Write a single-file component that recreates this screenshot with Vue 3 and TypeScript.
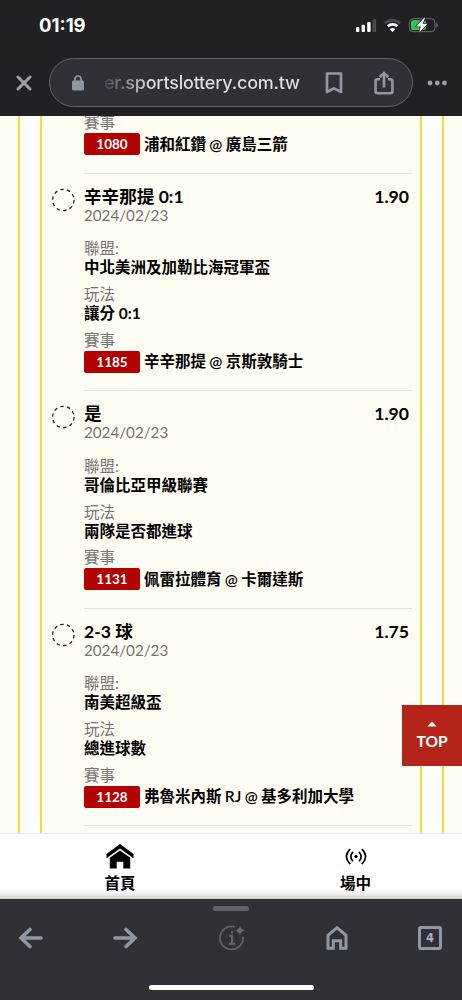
<script setup lang="ts">
interface Bet {
  pick: string
  odds: string
  league: string
  market: string
  code: string
  match: string
}

const date = '2024/02/23'
const bets: Bet[] = [
  { pick: '辛辛那提 0:1', odds: '1.90', league: '中北美洲及加勒比海冠軍盃', market: '讓分 0:1', code: '1185', match: '辛辛那提 @ 京斯敦騎士' },
  { pick: '是', odds: '1.90', league: '哥倫比亞甲級聯賽', market: '兩隊是否都進球', code: '1131', match: '佩雷拉體育 @ 卡爾達斯' },
  { pick: '2-3 球', odds: '1.75', league: '南美超級盃', market: '總進球數', code: '1128', match: '弗魯米內斯 RJ @ 基多利加大學' },
]
</script>

<template>
  <div class="phone">
    <header class="chrome-top">
      <div class="status">
        <span class="time">01:19</span>
        <svg class="status-icons" width="86" height="20" viewBox="0 0 86 20">
          <g fill="#fff">
            <rect x="1" y="12" width="3.3" height="5" rx="1" />
            <rect x="6.6" y="9.7" width="3.4" height="7.3" rx="1" />
            <rect x="12.2" y="7" width="3.4" height="10" rx="1" />
            <rect x="17.7" y="4" width="3.4" height="13" rx="1" fill="#4c4c50" />
          </g>
          <g fill="none">
            <path d="M29.8 8.2a11.2 11.2 0 0 1 15.4 0" stroke="#4c4c50" stroke-width="2.5" />
            <path d="M32.6 11.3a7.2 7.2 0 0 1 9.8 0" stroke="#fff" stroke-width="2.6" />
            <path d="M37.5 17l-2.7-2.8a3.9 3.9 0 0 1 5.4 0z" fill="#fff" />
          </g>
          <rect x="54.4" y="3.7" width="25.6" height="13" rx="3.8" fill="none" stroke="#6e6e72" stroke-width="1" />
          <path d="M81.3 8v4.4q1.6-.6 1.6-2.2t-1.6-2.2z" fill="#6e6e72" />
          <rect x="56" y="5.3" width="15" height="9.8" rx="2.2" fill="#30c759" />
          <path d="M69.2 2.8l-8 8.6h4.6l-1.7 6.3 8.3-8.9h-4.8l2.4-6z" fill="#fff" stroke="#202025" stroke-width="1.5" paint-order="stroke" />
        </svg>
      </div>
      <div class="address-row">
        <svg class="close" width="16" height="16" viewBox="0 0 16 16"><path d="M2 2l12 12M14 2L2 14" stroke="#9aa0a6" stroke-width="3" stroke-linecap="round" /></svg>
        <div class="address">
          <svg class="lock" width="12" height="16" viewBox="0 0 12 16"><rect y="5.6" width="12" height="10" rx="1.5" fill="#9298a3" /><path d="M3 6.2V4a3 3 0 0 1 6 0v2.2" fill="none" stroke="#9298a3" stroke-width="1.7" /></svg>
          <span class="url">er.sportslottery.com.tw</span>
          <svg class="bookmark" width="18" height="22" viewBox="0 0 18 22"><path d="M2 1.5h14V20l-7-3.6L2 20z" fill="none" stroke="#9298a3" stroke-width="2.7" stroke-linejoin="round" /></svg>
          <svg class="share" width="20" height="24" viewBox="0 0 20 24"><path d="M6 8.3H3.6a2 2 0 0 0-2 2v10a2 2 0 0 0 2 2h12.8a2 2 0 0 0 2-2v-10a2 2 0 0 0-2-2H14M10 16.5V2.5M5.7 6.2L10 2l4.3 4.2" fill="none" stroke="#9298a3" stroke-width="2.6" /></svg>
        </div>
        <svg class="more" width="20" height="6" viewBox="0 0 20 6" fill="#9aa0a6"><circle cx="3" cy="3" r="2.4" /><circle cx="10.3" cy="3" r="2.4" /><circle cx="17.5" cy="3" r="2.4" /></svg>
      </div>
    </header>

    <main class="page">
      <div class="outer">
        <div class="sheet">
          <div class="tail">
            <div class="label">賽事</div>
            <div class="match"><span class="code">1080</span><span>浦和紅鑽 @ 廣島三箭</span></div>
          </div>
          <article v-for="bet in bets" :key="bet.code" class="bet">
            <svg class="ring" width="24" height="24" viewBox="0 0 24 24"><circle cx="12.3" cy="12" r="10.7" fill="none" stroke="#222" stroke-width="1.3" stroke-dasharray="3.5 3.22" /></svg>
            <div class="details">
              <div class="headline"><span>{{ bet.pick }}</span><span>{{ bet.odds }}</span></div>
              <div class="date">{{ date }}</div>
              <div class="label first">聯盟:</div>
              <div class="value">{{ bet.league }}</div>
              <div class="label">玩法</div>
              <div class="value">{{ bet.market }}</div>
              <div class="label">賽事</div>
              <div class="match"><span class="code">{{ bet.code }}</span><span>{{ bet.match }}</span></div>
            </div>
          </article>
        </div>
      </div>
      <button class="to-top">
        <svg width="10" height="6" viewBox="0 0 10 6"><path d="M0.5 5.5L5 .5l4.5 5z" fill="#fff" /></svg>
        <span>TOP</span>
      </button>
    </main>

    <nav class="tabs">
      <div class="tab home">
        <svg width="28" height="26" viewBox="0 0 28 26"><path d="M.5 13V10L14 0l13.5 10v4.3L14 4.4.5 14.3z" /><path d="M3.8 13.7L14 6.4l10.2 7.3v10.8h-6.900v-6.800h-6.600v6.800H3.800z" /></svg>
        <span>首頁</span>
      </div>
      <div class="tab live">
        <svg width="22" height="26" viewBox="0 0 22 26" fill="none" stroke="#000" stroke-width="1.7" stroke-linecap="round"><path d="M4.600 5.700q-6.400 6.900 0 13.800M17.400 5.700q6.400 6.900 0 13.800M7.500 8.500q-3.400 4.100 0 8.200M14.500 8.500q3.400 4.100 0 8.200" /><circle cx="11" cy="12.600" r="1.700" fill="#000" stroke="none" /></svg>
        <span>場中</span>
      </div>
    </nav>

    <footer class="chrome-bottom">
      <i class="grabber"></i>
      <div class="tools">
        <svg width="26" height="24" viewBox="0 0 26 24"><path d="M23 12H3M12 3.500L3 12l9 8.500" /></svg>
        <svg width="26" height="24" viewBox="0 0 26 24"><path d="M3 12h20M14 3.500l9 8.500-9 8.500" /></svg>
        <svg class="dim" width="28" height="28" viewBox="0 0 28 28"><path d="M16 2.700A11.500 11.500 0 1 0 25 13.500" /><path class="info" d="M11 11.800h3v8M10.800 19.800h6.400M14 7v2.600" /><path class="spark" d="M22 1.500q.9 4.300 5 5-4.100.8-5 5-.9-4.200-5-5 4.100-.7 5-5z" /></svg>
        <svg class="square" width="24" height="26" viewBox="0 0 24 26"><path d="M3 10.300l9-7.700 9 7.700v12.900h-5.300v-7.400H8.300v7.400H3z" /></svg>
        <div class="count">4</div>
      </div>
      <i class="indicator"></i>
    </footer>
  </div>
</template>

<style>
body {
  background: #303136;
}
</style>

<style scoped>
.phone {
  width: 462px;
  height: 1000px;
  overflow: hidden;
  display: flex;
  flex-direction: column;
  font-family: Lato, "Noto Sans CJK TC", sans-serif;
  color: #000;
}
svg {
  display: block;
  flex: none;
}
.chrome-top {
  flex: none;
  height: 116px;
  box-sizing: border-box;
  background: #202025;
  font-family: Inter, sans-serif;
}
.status {
  height: 58px;
  box-sizing: border-box;
  padding: 15px 21px 0 39px;
  display: flex;
  justify-content: space-between;
}
.time {
  color: #fff;
  font-size: 18.5px;
  line-height: 21px;
  font-weight: 700;
}
.address-row {
  display: flex;
  align-items: center;
  padding: 0 14px 0 16px;
}
.address {
  box-sizing: border-box;
  width: 364px;
  height: 49px;
  margin-left: 17px;
  border: 1px solid #62636a;
  border-radius: 25px;
  background: #303136;
  display: flex;
  align-items: center;
  padding-left: 22px;
}
.url {
  width: 198px;
  margin-left: 20px;
  white-space: nowrap;
  font-size: 18px;
  letter-spacing: -0.2px;
  font-weight: 500;
  color: transparent;
  background: linear-gradient(90deg, #42434a 0, #dfe0e5 46px);
  -webkit-background-clip: text;
  background-clip: text;
}
.bookmark {
  margin-left: 23px;
}
.share {
  margin-left: 31px;
}
.more {
  margin-left: 14px;
}
.page {
  position: relative;
  flex: none;
  height: 717px;
  overflow: hidden;
  background: #fffcf2;
}
.outer {
  height: 100%;
  margin: 0 18px;
  padding: 0 20px;
  border: solid #fdd835;
  border-width: 0 2px;
  background: #fff;
  box-sizing: border-box;
}
.sheet {
  display: flow-root;
  height: 100%;
  box-sizing: border-box;
  border: solid #fdd835;
  border-width: 0 2px;
  background: #fffcf2;
  padding: 0 8px 0 10px;
}
.tail {
  margin: -3px 0 0 32px;
  height: 59.5px;
  border-bottom: 1px solid #e4e1da;
}
.bet {
  display: flex;
  height: 217.5px;
}
.ring {
  margin: 14px 8px 0 -1px;
}
.details {
  flex: 1;
  margin-left: 1px;
  padding-top: 12.2px;
  border-bottom: 1px solid #e4e1da;
  box-sizing: border-box;
}
.headline {
  display: flex;
  justify-content: space-between;
  padding-right: 3px;
  font-size: 17.6px;
  line-height: 21px;
  height: 20px;
  font-weight: 700;
}
.date {
  font-size: 15.2px;
  line-height: 19px;
  color: #747474;
}
.label {
  font-size: 15.5px;
  line-height: 19px;
  height: 19px;
  color: #747474;
  margin-top: 7.7px;
}
.tail .label {
  margin-top: 0;
}
.label.first {
  margin-top: 14.7px;
}
.value {
  font-size: 15.5px;
  line-height: 19px;
  height: 19px;
  font-weight: 700;
}
.match {
  display: flex;
  align-items: center;
  height: 22px;
  line-height: 21px;
  margin-top: 1px;
  font-size: 15.5px;
  font-weight: 600;
  white-space: nowrap;
  word-spacing: -0.5px;
}
.code {
  width: 56px;
  height: 22px;
  line-height: 22px;
  margin-right: 4px;
  border-radius: 2px;
  background: #b30000;
  color: #fff;
  font-size: 13.5px;
  font-weight: 700;
  text-align: center;
}
.to-top {
  position: absolute;
  right: 0;
  top: 589px;
  width: 60px;
  height: 61px;
  padding: 1px 0 0;
  border: 0;
  background: #b5241b;
  color: #fff;
  font: 700 15.5px/20px Lato, sans-serif;
  display: flex;
  flex-direction: column;
  align-items: center;
  justify-content: center;
  gap: 4px;
}
.tabs {
  flex: none;
  height: 66px;
  display: flex;
  box-sizing: border-box;
  border-top: 1px solid #e8e8e8;
  background: linear-gradient(#fff 0, #fff 53px, #f5f5f5 59px, #c9c9c9 66px);
}
.tab {
  flex: none;
  display: flex;
  flex-direction: column;
  align-items: center;
  padding-top: 10px;
  font-size: 15.5px;
  line-height: 20px;
  font-weight: 600;
}
.tab span {
  margin-top: 3px;
}
.home {
  width: 240px;
}
.live {
  width: 231px;
}
.chrome-bottom {
  flex: none;
  height: 101px;
  background: #303136;
  display: flex;
  flex-direction: column;
  align-items: center;
}
.grabber {
  width: 36px;
  height: 5px;
  border-radius: 3px;
  margin-top: 7px;
  background: #5f6368;
}
.tools {
  box-sizing: border-box;
  width: 100%;
  height: 50px;
  margin-top: 2px;
  padding-left: 18px;
  display: grid;
  grid-template-columns: 94px 106px 107px 93px 24px;
  align-items: center;
  fill: none;
  stroke: #9298a3;
  stroke-width: 3.6;
}
.tools svg {
  stroke-linecap: round;
}
.tools .dim {
  stroke: #5f6368;
  stroke-width: 1.8;
}
.tools .info {
  stroke-width: 2.2;
  stroke-linecap: butt;
}
.tools .spark {
  fill: #6a6e74;
  stroke: none;
}
.tools .square {
  stroke-linecap: butt;
  stroke-width: 3;
}
.count {
  box-sizing: border-box;
  width: 24px;
  height: 24px;
  border: 3px solid #9298a3;
  border-radius: 3px;
  color: #a9aeb8;
  font: 700 11.5px/18px "DejaVu Sans", sans-serif;
  text-align: center;
}
.indicator {
  width: 165px;
  height: 5px;
  border-radius: 3px;
  margin-top: 22px;
  background: #fff;
}
</style>
